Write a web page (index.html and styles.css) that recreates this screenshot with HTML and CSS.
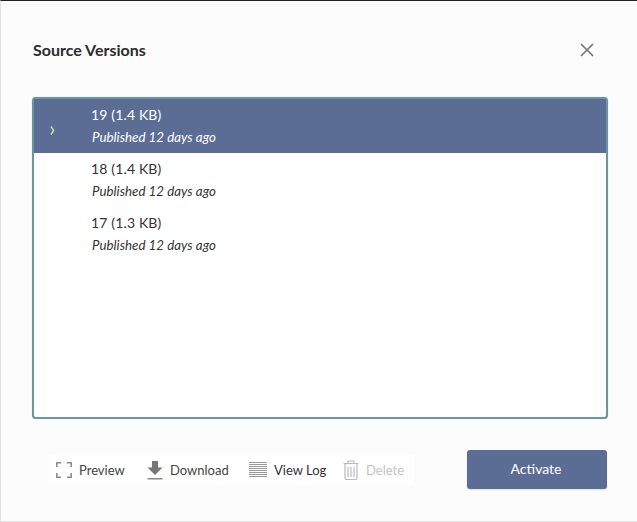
FILE: index.html
```html
<!DOCTYPE html>
<html lang="en">
<head>
<meta charset="utf-8">
<title>Source Versions</title>
<link rel="stylesheet" href="styles.css">
</head>
<body>
<div class="dialog">
  <header class="head">
    <h1 class="title">Source Versions</h1>
    <button class="close" aria-label="Close">
      <svg width="14" height="14" viewBox="0 0 14 14"><path d="M1 1L13 13M13 1L1 13" stroke="#777" stroke-width="1.7" fill="none"/></svg>
    </button>
  </header>
  <div class="list">
    <div class="row selected">
      <svg class="chev" width="5" height="9" viewBox="0 0 5 9"><path d="M1 0.5L3.6 4.5L1 8.5" stroke="#c4e87e" stroke-width="1.4" fill="none"/></svg>
      <div class="name">19 (1.4 KB)</div>
      <div class="meta">Published 12 days ago</div>
    </div>
    <div class="row">
      <div class="name">18 (1.4 KB)</div>
      <div class="meta">Published 12 days ago</div>
    </div>
    <div class="row">
      <div class="name">17 (1.3 KB)</div>
      <div class="meta">Published 12 days ago</div>
    </div>
  </div>
  <footer class="foot">
    <div class="tools">
      <span class="tool preview">
        <svg width="16" height="16" viewBox="0 0 16 16"><path d="M0.8 5V0.8H5M11 0.8H15.2V5M0.8 11V15.2H5M11 15.2H15.2V11" stroke="#888" stroke-width="1.5" fill="none"/></svg>
        Preview
      </span>
      <span class="tool download">
        <svg width="16" height="19" viewBox="0 0 16 19"><path d="M5 0H11V6.5H15.5L8 14L0.500 6.5H5Z" fill="#777"/><rect x="0.5" y="17" width="15" height="1.5" fill="#888"/></svg>
        Download
      </span>
      <span class="tool log">
        <svg width="18" height="16" viewBox="0 0 18 16"><path d="M0 .5H18M0 2.500H18M0 4.500H18M0 6.500H18M0 8.500H18M0 10.500H18M0 12.500H18M0 14.500H18" stroke="#999" stroke-width="1"/></svg>
        View Log
      </span>
      <span class="tool delete">
        <svg width="16" height="20" viewBox="0 0 16 20"><path d="M0.500 3.500H15.500M5 3V1H11V3M2 4V18A1.500 1.500 0 0 0 3.500 19.500H12.500A1.500 1.500 0 0 0 14 18V4M5 7V17M8 7V17M11 7V17" stroke="#bbb" stroke-width="1.200" fill="none"/></svg>
        Delete
      </span>
    </div>
    <button class="activate">Activate</button>
  </footer>
</div>
</body>
</html>
```
FILE: styles.css
```css
* { box-sizing: border-box; }
html, body { margin: 0; height: 100%; }
body {
  background: #fcfcfc;
  font-family: Lato, sans-serif;
  color: #333;
  overflow: hidden;
}
.dialog {
  height: 522px;
  border-top: 1px solid #222;
  border-left: 1px solid #e2e2e2;
  border-bottom: 1px solid #e2e2e2;
  padding: 0 29px 0 31px;
  display: flex;
  flex-direction: column;
}
.head {
  height: 96px;
  display: flex;
  justify-content: space-between;
  align-items: flex-start;
  padding: 39px 0 0 1px;
}
.title {
  margin: 0;
  font-size: 16px;
  line-height: 20px;
  font-weight: 700;
  color: #2b2b2b;
}
.close {
  border: 0;
  padding: 0;
  background: none;
  width: 14px;
  height: 14px;
  margin: 3px 14px 0 0;
  display: block;
}
.close svg, .tool svg { display: block; }
.list {
  height: 322px;
  background: #fff;
  border: 2px solid #6a979f;
  border-radius: 4px;
  box-shadow: 0 0 1px rgba(106, 151, 159, .6);
}
.row {
  position: relative;
  height: 54px;
  padding: 6px 0 0 57px;
  color: #333;
}
.row.selected { background: #5b6d94; color: #fff; }
.chev { position: absolute; left: 16px; top: 27px; }
.name { font-size: 14px; line-height: 19px; letter-spacing: .15px; }
.meta { font-size: 13.3px; line-height: 17px; margin: 5px 0 0 1px; letter-spacing: .02px; font-style: italic; }
.foot {
  display: flex;
  align-items: flex-start;
  justify-content: space-between;
  padding: 31px 1px 0 17px;
}
.tools {
  margin-top: 5px;
  height: 30px;
  width: 365px;
  background: #fff;
  border-radius: 3px;
  display: flex;
  align-items: center;
  font-size: 13px;
  color: #444;
  padding-left: 7px;
}
.tool { display: flex; align-items: center; }
.preview svg { margin-right: 7px; }
.preview { width: 91px; }
.download { width: 102px; }
.download svg { margin-right: 7px; }
.log { width: 94px; color: #333; }
.log svg { margin-right: 7px; }
.delete { color: #c4c4c4; }
.delete svg { margin-right: 7px; }
.activate {
  width: 140px;
  height: 39px;
  border: 0;
  border-radius: 3px;
  background: #5b6d94;
  color: #fff;
  font: 14px Lato, sans-serif;
  padding: 0 2px 2px 0;
  box-shadow: 0 1px 2px rgba(0,0,0,.12);
}
```
